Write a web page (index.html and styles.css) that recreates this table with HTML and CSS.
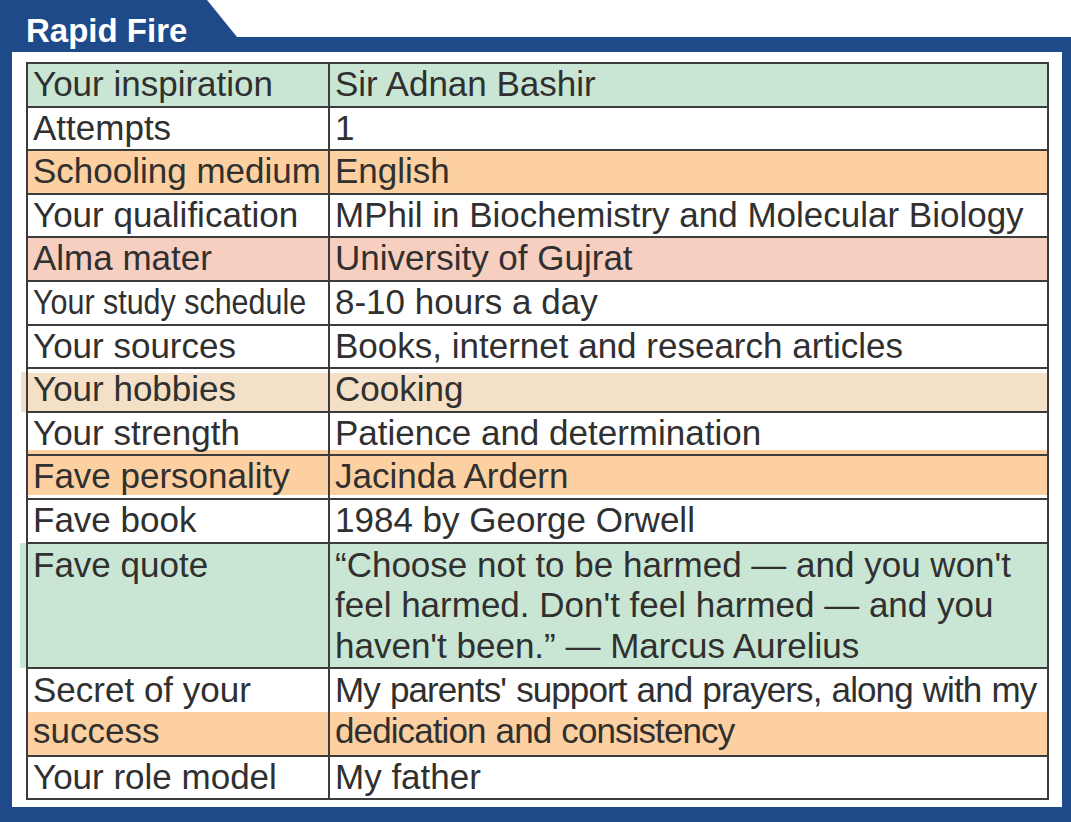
FILE: index.html
```html
<!DOCTYPE html>
<html lang="en">
<head>
<meta charset="utf-8">
<title>Rapid Fire</title>
<link rel="stylesheet" href="styles.css">
</head>
<body>
<div class="page">
  <div class="head">
    <h1 class="tab">Rapid Fire</h1>
    <div class="band"></div>
  </div>
  <div class="panel">
    <table class="qa">
      <colgroup><col class="c-q"><col class="c-a"></colgroup>
      <tbody>
        <tr class="green"><td>Your inspiration</td><td>Sir Adnan Bashir</td></tr>
        <tr><td>Attempts</td><td>1</td></tr>
        <tr class="orange"><td>Schooling medium</td><td>English</td></tr>
        <tr><td>Your qualification</td><td>MPhil in Biochemistry and Molecular Biology</td></tr>
        <tr class="salmon"><td>Alma mater</td><td>University of Gujrat</td></tr>
        <tr><td><span class="narrow">Your study schedule</span></td><td>8-10 hours a day</td></tr>
        <tr><td>Your sources</td><td>Books, internet and research articles</td></tr>
        <tr class="beige"><td>Your hobbies</td><td>Cooking</td></tr>
        <tr class="bleed-below"><td>Your strength</td><td>Patience and determination</td></tr>
        <tr class="orange-up"><td>Fave personality</td><td>Jacinda Ardern</td></tr>
        <tr><td>Fave book</td><td>1984 by George Orwell</td></tr>
        <tr class="green quote"><td>Fave quote</td><td>“Choose not to be harmed — and you won't<br>feel harmed. Don't feel harmed — and you<br>haven't been.” — Marcus Aurelius</td></tr>
        <tr class="half"><td>Secret of your success</td><td class="tight">My parents' support and prayers, along with my<br>dedication and consistency</td></tr>
        <tr><td>Your role model</td><td>My father</td></tr>
      </tbody>
    </table>
  </div>
</div>
</body>
</html>
```
FILE: styles.css
```css
* { box-sizing: border-box; }
html, body { margin: 0; padding: 0; background: #ffffff; }
body { font-family: "Liberation Sans", Arial, sans-serif; }

.page { width: 1071px; height: 822px; }

.head { display: flex; height: 52px; }
.tab {
  margin: 0;
  width: 237px;
  height: 52px;
  padding: 12px 0 0 26px;
  background: #1e4a8a;
  color: #ffffff;
  font-size: 33px;
  font-weight: 700;
  line-height: 37px;
  clip-path: polygon(0 0, 207px 0, 237px 37px, 237px 100%, 0 100%);
}
.band { flex: 1; align-self: flex-end; height: 15px; background: #1e4a8a; }

.panel {
  height: 770px;
  border-style: solid;
  border-color: #1e4a8a;
  border-width: 0 9px 15px 12px;
  padding: 10px 15px 9px 14px;
  background: #ffffff;
}

.qa {
  width: 1021px;
  border-collapse: collapse;
  table-layout: fixed;
  border: 2px solid #3c3c3c;
  color: #303030;
  font-size: 35px;
  line-height: 40.6px;
}
.c-q { width: 302px; }
.c-a { width: 719px; }
.qa td {
  border: 2px solid #3c3c3c;
  padding: 0 4px 1px 5px;
  vertical-align: top;
  white-space: nowrap;
  background: #ffffff;
}
.qa td:first-child { white-space: normal; }

.narrow { display: inline-block; transform: scaleX(0.87); transform-origin: left center; white-space: nowrap; }
.tight { letter-spacing: -0.9px; word-spacing: 1.2px; }

.green td { background: #c9e6d4; }
.orange td { background: #fcd0a0; }
.salmon td { background: #f7cfc0; }

.beige td { background: linear-gradient(to bottom, #ffffff 0, #ffffff 4px, #f3e0c6 4px); }
.beige td:first-child { box-shadow: -8px 2px 0 -2px #f3e0c6; }

.bleed-below td { background: linear-gradient(to top, #fcd0a0 0, #fcd0a0 4px, #ffffff 4px); }
.orange-up td { background: linear-gradient(to top, #ffffff 0, #ffffff 3px, #fcd0a0 3px); }

.quote td { padding-top: 1px; }
.quote td:first-child { box-shadow: -7px 0 0 0 #c9e6d4; }

.half td {
  padding-top: 1px;
  padding-bottom: 3px;
  background: linear-gradient(to bottom, #ffffff 0, #ffffff 43px, #fcd0a0 43px);
}
```
